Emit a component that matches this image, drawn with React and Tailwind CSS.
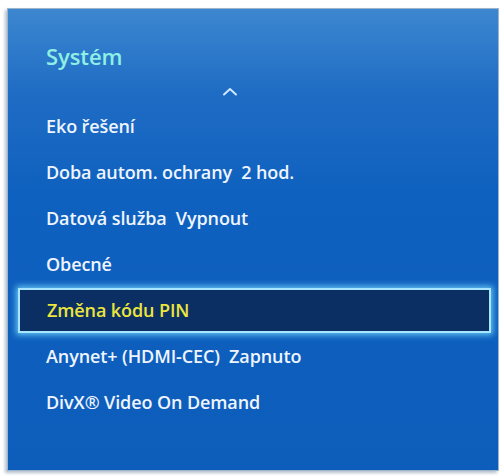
import React from "react";

const items = [
  { label: "Eko řešení" },
  { label: "Doba autom. ochrany  2 hod." },
  { label: "Datová služba  Vypnout" },
  { label: "Obecné" },
  { label: "Změna kódu PIN", active: true },
  { label: "Anynet+ (HDMI-CEC)  Zapnuto" },
  { label: "DivX® Video On Demand" },
];

function MenuRow({ label, active }) {
  if (active) {
    return (
      <div className="h-[46px] flex items-center">
        <div className="ml-[10px] w-[473px] h-[45px] flex items-center pl-[27px] bg-[#0b2f62] border-2 border-[#a8e6ff] shadow-[0_0_6px_2px_rgba(120,220,255,0.8)]">
          <span className="text-[#ece53c] whitespace-pre">{label}</span>
        </div>
      </div>
    );
  }
  return (
    <div className="h-[46px] flex items-center pl-[38px]">
      <span className="text-[#eef5ff] whitespace-pre">{label}</span>
    </div>
  );
}

export default function App() {
  return (
    <div className="w-[504px] h-[476px] bg-white pt-[8px] pl-[7px]">
      <div
        className="w-[492px] h-[463px] border border-[#9cb4cc] shadow-[-2px_2px_3px_rgba(40,70,110,0.35)] bg-[linear-gradient(180deg,#3d87d0_0%,#1f6cc4_18%,#0f61bf_40%,#0d5dbb_100%)] text-[18px] font-semibold tracking-[-0.1px]"
        style={{ fontFamily: '"Open Sans", "Noto Sans", sans-serif' }}
      >
        <div className="h-[94px] relative pl-[38px] pt-[36px]">
          <div className="text-[22px] font-semibold leading-none text-[#8ef0e4]">Systém</div>
          <svg className="absolute left-[214px] top-[78px]" width="16" height="9" viewBox="0 0 16 9">
            <path d="M2 7.5 L8 2 L14 7.5" fill="none" stroke="#cfe8ff" strokeWidth="2" strokeLinecap="round" strokeLinejoin="round" />
          </svg>
        </div>
        {items.map((item, i) => (
          <MenuRow key={i} label={item.label} active={item.active} />
        ))}
      </div>
    </div>
  );
}
